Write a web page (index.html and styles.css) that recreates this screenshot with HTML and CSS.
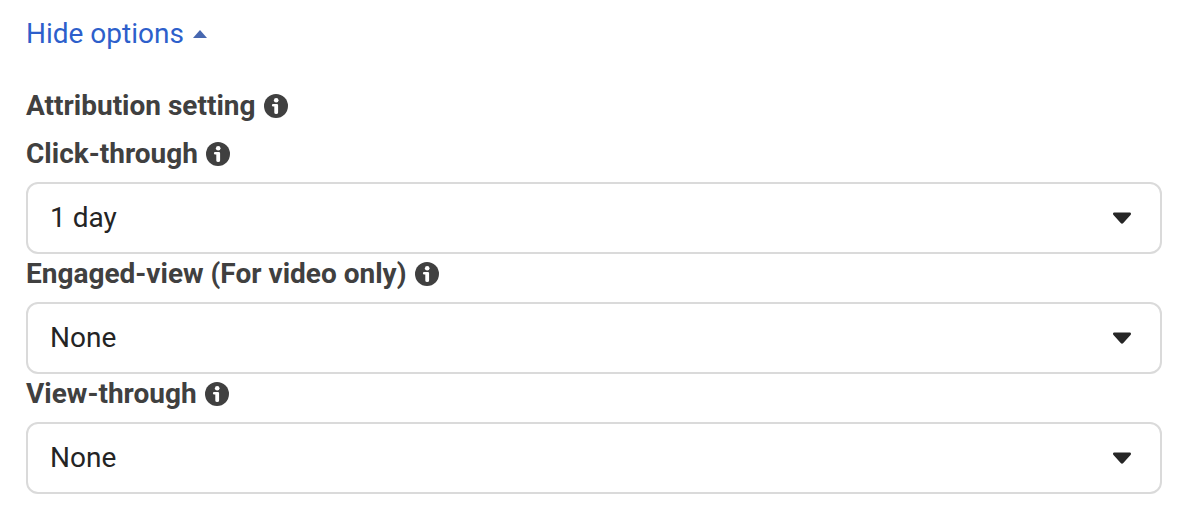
FILE: index.html
```html
<!DOCTYPE html>
<html lang="en">
<head>
  <meta charset="UTF-8" />
  <meta name="viewport" content="width=device-width, initial-scale=1.0"/>
  <title>Attribution setting</title>
  <link rel="stylesheet" href="styles.css">
</head>
<body>

<svg class="sprite" aria-hidden="true">
  <symbol id="icon-info" viewBox="0 0 24 24">
    <circle cx="12" cy="12" r="12" fill="#404040"/>
    <circle cx="12.2" cy="6.2" r="2.3" fill="#fff"/>
    <path d="M9.200 10h3.700q1.200 0 1.200 1.200v7.400q0 1.500-1.900 1.500t-1.900-1.500V12.600H9.200q-1.300 0-1.300-1.300T9.200 10z" fill="#fff"/>
  </symbol>
  <symbol id="icon-caret" viewBox="0 0 18 12">
    <path d="M1.500 .5h15c1.500 0 2 1.500 1 2.600l-7.200 8q-1.300 1.200-2.600 0L.5 3.100C-.5 2 0 .5 1.500 .5z" fill="#262626"/>
  </symbol>
</svg>

<main class="container">
  <button class="toggle" type="button" aria-expanded="true" aria-controls="options">
    Hide options
    <svg class="toggle-caret" viewBox="0 0 16 8" aria-hidden="true"><path d="M1 8L8 0l7 8z" fill="#4767b0"/></svg>
  </button>

  <section id="options">
    <div class="label-row">
      <h2>Attribution setting</h2>
      <button class="info" type="button" aria-label="About attribution setting"><svg><use href="#icon-info"/></svg></button>
    </div>

    <!-- Click-through -->
    <div class="label-row">
      <label for="click">Click-through</label>
      <button class="info" type="button" aria-label="About click-through"><svg><use href="#icon-info"/></svg></button>
    </div>
    <div class="select-box">
      <select id="click">
        <option>1 day</option>
        <option>7 days</option>
      </select>
      <svg class="caret" aria-hidden="true"><use href="#icon-caret"/></svg>
    </div>

    <!-- Engaged-view -->
    <div class="label-row">
      <label for="engaged">Engaged-view (For video only)</label>
      <button class="info" type="button" aria-label="About engaged-view"><svg><use href="#icon-info"/></svg></button>
    </div>
    <div class="select-box">
      <select id="engaged">
        <option>None</option>
        <option>1 day</option>
      </select>
      <svg class="caret" aria-hidden="true"><use href="#icon-caret"/></svg>
    </div>

    <!-- View-through -->
    <div class="label-row">
      <label for="view">View-through</label>
      <button class="info" type="button" aria-label="About view-through"><svg><use href="#icon-info"/></svg></button>
    </div>
    <div class="select-box">
      <select id="view">
        <option>None</option>
        <option>1 day</option>
      </select>
      <svg class="caret" aria-hidden="true"><use href="#icon-caret"/></svg>
    </div>
  </section>
</main>

</body>
</html>
```
FILE: styles.css
```css
body {
  font-family: Roboto, Arial, sans-serif;
  font-size: 28px;
  line-height: 40px;
  background: #fff;
  color: #242424;
  margin: 0;
}
.sprite {
  display: none;
}
.container {
  padding: 14px 20px 30px 26px;
}
button {
  background: none;
  border: none;
  padding: 0;
  font: inherit;
  cursor: pointer;
}
.toggle {
  display: flex;
  align-items: center;
  gap: 8px;
  margin-bottom: 32px;
  color: #2d5fcb;
}
.toggle-caret {
  width: 16px;
  height: 8px;
}
.label-row {
  display: flex;
  align-items: center;
  gap: 8px;
  padding-bottom: 8px;
  font-weight: bold;
  color: #404040;
}
.label-row h2 {
  margin: 0;
  font-size: 28px;
}
.info {
  display: flex;
}
.info svg {
  width: 24px;
  height: 24px;
}
.select-box {
  display: grid;
  align-items: center;
}
.select-box select, .caret {
  grid-area: 1 / 1;
}
.select-box select {
  appearance: none;
  width: 100%;
  height: 72px;
  padding: 0 60px 0 22px;
  border: 2px solid #dadada;
  border-radius: 12px;
  background: #fff;
  color: #242424;
  font: inherit;
}
.caret {
  justify-self: end;
  width: 18px;
  height: 12px;
  margin-right: 31px;
  pointer-events: none;
}
```
